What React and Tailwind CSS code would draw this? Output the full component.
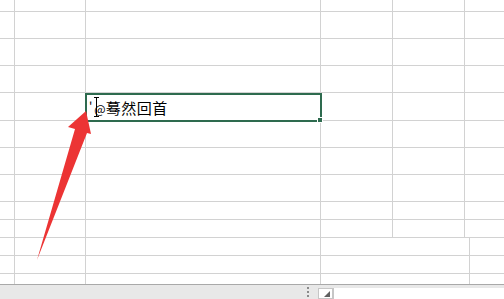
import React from 'react';

const cols = [15, 71, 235, 72, 72, 39];
const lowCols = [15, 71, 235, 149, 34];

function Row({ h, widths }) {
    return (
        <div className="flex border-b border-[#d2d2d2]" style={{ height: h }}>
            {widths.map((w, i) => (
                <div
                    key={i}
                    className={i < widths.length - 1 ? 'shrink-0 border-r border-[#d2d2d2]' : 'flex-1'}
                    style={{ width: i < widths.length - 1 ? w : undefined }}
                />
            ))}
        </div>
    );
}

function Sheet() {
    const top = [12, 27, 27, 27, 28, 27, 27, 27, 18, 18];
    const bottom = [18, 18];
    return (
        <div className="relative h-[284px] overflow-hidden bg-white">
            {top.map((h, i) => <Row key={'t' + i} h={h} widths={cols} />)}
            {bottom.map((h, i) => <Row key={'b' + i} h={h} widths={lowCols} />)}
            <div className="flex h-[11px]">
                <div className="w-[15px] border-r border-[#d2d2d2]" />
                <div className="w-[71px] border-r border-[#d2d2d2]" />
                <div className="w-[235px] border-r border-[#d2d2d2]" />
                <div className="w-[149px] border-r border-[#d2d2d2]" />
            </div>

            {/* active cell */}
            <div className="absolute left-[85px] top-[93px] w-[237px] h-[29px] border-2 border-[#2e6b4f] flex items-center pl-[2px] font-['Noto_Sans_CJK_SC',sans-serif] text-[15px] leading-none text-black">
                <span className="text-[12px] mr-[2px] -mt-[4px]">'</span>
                <span className="relative text-[12px] mt-[2px]">
                    @
                    <span className="absolute left-[2px] -top-[6px] w-px h-[19px] bg-black" />
                    <span className="absolute left-0 -top-[6px] w-[5px] h-px bg-black" />
                    <span className="absolute left-0 top-[13px] w-[5px] h-px bg-black" />
                </span>
                <span className="tracking-[0.5px]">蓦然回首</span>
                <div className="absolute -right-[3px] -bottom-[3px] w-[6px] h-[6px] bg-[#2e6b4f] border border-white" />
            </div>

            {/* red arrow */}
            <svg className="absolute left-0 top-0" width="504" height="284" viewBox="0 0 504 284">
                <polygon
                    points="86,111 91,134 87,133 37,260 75,129 68,127"
                    fill="#ec3434"
                />
            </svg>
        </div>
    );
}

function StatusBar() {
    return (
        <div className="flex h-[15px] border-t border-[#a9a9a9] bg-[#e8e8e8]">
            <div className="w-[298px]" />
            <div className="w-[20px] flex flex-col items-center justify-center gap-[2px]">
                <span className="w-[2px] h-[2px] bg-[#8a8a8a]" />
                <span className="w-[2px] h-[2px] bg-[#8a8a8a]" />
                <span className="w-[2px] h-[2px] bg-[#8a8a8a]" />
            </div>
            <div className="w-[15px] mt-[3px] bg-white border border-[#c6c6c6] flex items-end justify-end pr-[2px] pb-[1px]">
                <svg width="6" height="6" viewBox="0 0 6 6">
                    <polygon points="6,0 6,6 0,6" fill="#606060" />
                </svg>
            </div>
            <div className="flex-1 mt-[3px] bg-white border-l border-[#c6c6c6]" />
        </div>
    );
}

export default function App() {
    return (
        <div className="w-[504px] h-[299px] overflow-hidden bg-white">
            <Sheet />
            <StatusBar />
        </div>
    );
}
